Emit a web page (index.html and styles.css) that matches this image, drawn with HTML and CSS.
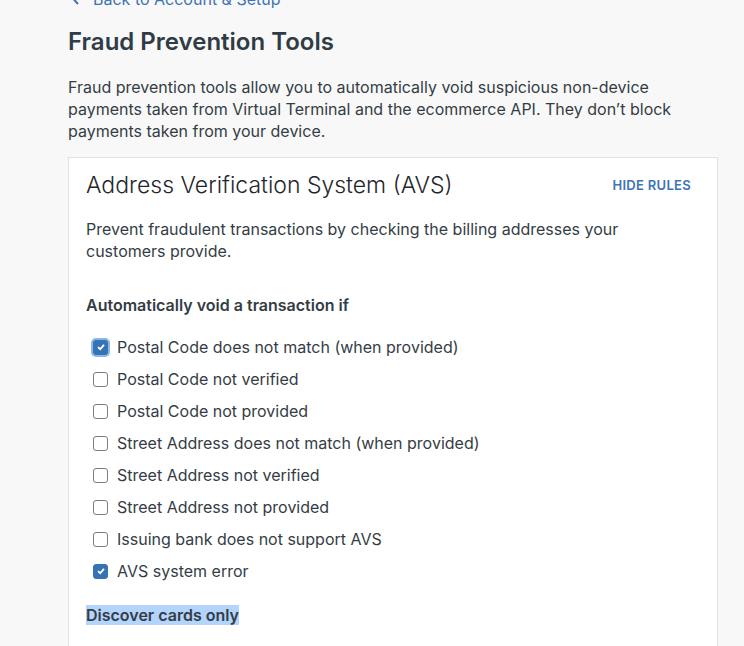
FILE: index.html
```html
<!DOCTYPE html>
<html>
<head>
<meta charset="utf-8">
<link rel="stylesheet" href="styles.css">
</head>
<body>
<div class="page">
  <a class="back" href="#"><svg class="chev" width="8" height="12" viewBox="0 0 8 12"><path d="M6 1 L1.5 6 L6 11" fill="none" stroke="#3e74b4" stroke-width="2"/></svg>Back to Account &amp; Setup</a>
  <h1 class="title">Fraud Prevention Tools</h1>
  <p class="intro">Fraud prevention tools allow you to automatically void suspicious non-device payments taken from Virtual Terminal and the ecommerce API. They don’t block payments taken from your device.</p>
  <div class="card">
    <div class="card-head">
      <h2 class="card-title">Address Verification System (AVS)</h2>
      <a class="hide" href="#">HIDE RULES</a>
    </div>
    <p class="card-desc">Prevent fraudulent transactions by checking the billing addresses your customers provide.</p>
    <h3 class="section">Automatically void a transaction if</h3>
    <ul class="rules">
      <li class="rule"><span class="box checked focus"><svg viewBox="0 0 10 10" width="10" height="10"><path d="M2 5.2 L4.2 7.2 L8 2.8" fill="none" stroke="#fff" stroke-width="1.8"/></svg></span>Postal Code does not match (when provided)</li>
      <li class="rule"><span class="box"></span>Postal Code not verified</li>
      <li class="rule"><span class="box"></span>Postal Code not provided</li>
      <li class="rule"><span class="box"></span>Street Address does not match (when provided)</li>
      <li class="rule"><span class="box"></span>Street Address not verified</li>
      <li class="rule"><span class="box"></span>Street Address not provided</li>
      <li class="rule"><span class="box"></span>Issuing bank does not support AVS</li>
      <li class="rule"><span class="box checked"><svg viewBox="0 0 10 10" width="10" height="10"><path d="M2 5.2 L4.2 7.2 L8 2.8" fill="none" stroke="#fff" stroke-width="1.8"/></svg></span>AVS system error</li>
    </ul>
    <h3 class="section discover"><span class="sel">Discover cards only</span></h3>
  </div>
</div>
</body>
</html>
```
FILE: styles.css
```css
html, body {
  margin: 0;
  padding: 0;
  background: #f8f8f8;
  font-family: Inter, "Liberation Sans", Arial, sans-serif;
  color: #343d45;
}
.page {
  padding-left: 68px;
  width: 650px;
  margin-top: -12px;
}
.back {
  display: flex;
  align-items: center;
  gap: 13px;
  height: 22px;
  padding-left: 4px;
  color: #3e74b4;
  font-size: 16px;
  text-decoration: none;
}
.title {
  margin: 17px 0 0;
  font-size: 24px;
  line-height: 30px;
  font-weight: 600;
  color: #2f3c45;
}
.intro {
  margin: 19px 0 0;
  font-size: 16px;
  line-height: 22px;
}
.card {
  margin-top: 15px;
  background: #fff;
  border: 1px solid #e2e2e2;
  padding: 11px 26px 30px 17px;
}
.card-head {
  display: flex;
  justify-content: space-between;
  align-items: center;
}
.card-title {
  margin: 0;
  font-size: 23px;
  line-height: 32px;
  font-weight: 300;
  color: #1f272d;
}
.hide {
  font-size: 13px;
  font-weight: 600;
  color: #3e74b4;
  text-decoration: none;
  letter-spacing: 0.3px;
}
.card-desc {
  margin: 17px 0 0;
  font-size: 16px;
  line-height: 22px;
}
.section {
  margin: 32px 0 0;
  font-size: 16px;
  line-height: 22px;
  font-weight: 600;
}
.rules {
  list-style: none;
  margin: 15px 0 0;
  padding: 0 0 0 7px;
}
.rule {
  display: flex;
  align-items: center;
  height: 32px;
  font-size: 16px;
}
.box {
  width: 13px;
  height: 13px;
  border: 1px solid #7a7f84;
  border-radius: 3px;
  margin-right: 9px;
  display: flex;
  align-items: center;
  justify-content: center;
  background: #fff;
}
.box.checked {
  background: #3673b3;
  border-color: #3673b3;
}
.box.focus {
  box-shadow: 0 0 0 2px #8ab6ee;
}
.discover {
  margin-top: 17px;
}
.sel {
  background: #b3d4fc;
}
```
